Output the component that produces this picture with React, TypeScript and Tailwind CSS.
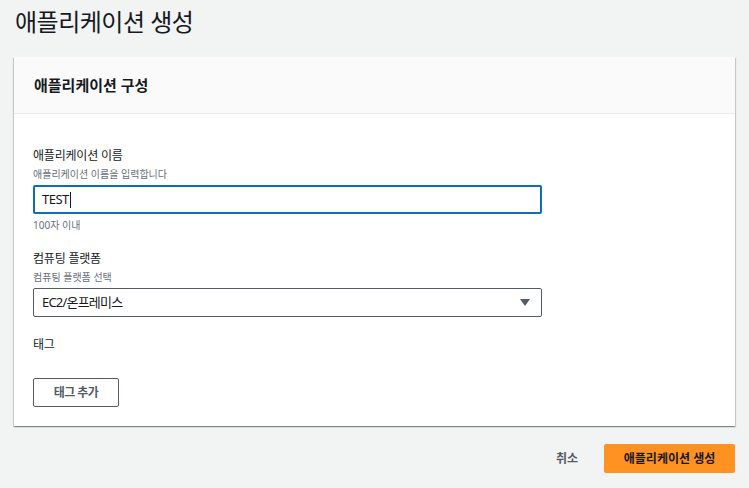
import React from "react";

export default function App() {
  const font = { fontFamily: '"Noto Sans", "Noto Sans CJK KR", sans-serif' };
  return (
    <div
      className="w-[749px] h-[488px] bg-[#f2f3f3] text-[#16191f] overflow-hidden"
      style={font}
    >
      <div className="px-[14px] pt-[6px]">
        <h1 className="text-[24px] leading-[32px] font-normal pl-[1px] tracking-[-0.5px] text-[#16191f]">
          애플리케이션 생성
        </h1>
        <div className="mt-[19px] bg-white shadow-[0_1px_1px_0_rgba(0,28,36,0.3),1px_1px_1px_0_rgba(0,28,36,0.15),-1px_1px_1px_0_rgba(0,28,36,0.15)]">
          <div className="h-[57px] bg-[#fafafa] border-b border-[#eaeded] flex items-center px-[20px]">
            <h2 className="text-[15px] font-bold leading-[20px]">애플리케이션 구성</h2>
          </div>
          <div className="px-[19px] pt-[32px] pb-[19px]">
            <div className="text-[12px] leading-[20px] tracking-[-0.2px] text-[#16191f]">애플리케이션 이름</div>
            <div className="text-[10px] leading-[16px] text-[#687078]">애플리케이션 이름을 입력합니다</div>
            <div className="mt-[3px] w-[509px] h-[29px] border-2 border-[#0a6ebd] rounded-[2px] flex items-center pl-[7px]">
              <span className="text-[13px] tracking-[-0.5px] text-[#16191f]">TEST</span>
              <span className="w-px h-[16px] bg-[#16191f] ml-[1px]" />
            </div>
            <div className="mt-[3px] text-[10px] leading-[16px] text-[#687078]">100자 이내</div>

            <div className="mt-[16px] text-[12px] leading-[20px] tracking-[-0.2px]">컴퓨팅 플랫폼</div>
            <div className="text-[10px] leading-[16px] text-[#687078]">컴퓨팅 플랫폼 선택</div>
            <div className="mt-[3px] w-[509px] h-[29px] border border-[#545b64] rounded-[2px] flex items-center justify-between pl-[8px] pr-[11px]">
              <span className="text-[13px] tracking-[-0.8px] text-[#16191f]">EC2/온프레미스</span>
              <svg width="10" height="7" viewBox="0 0 10 7">
                <path d="M0 0 L10 0 L5 7 Z" fill="#545b64" />
              </svg>
            </div>

            <div className="mt-[18px] text-[12px] leading-[20px] tracking-[-0.2px]">태그</div>
            <button className="mt-[23px] w-[86px] h-[29px] border border-[#545b64] rounded-[2px] bg-white text-[12px] font-bold tracking-[-0.6px] text-[#545b64] flex items-center justify-center">
              태그 추가
            </button>
          </div>
        </div>
        <div className="mt-[18px] flex justify-end items-center">
          <button className="text-[12px] font-bold text-[#545b64] mr-[26px]">취소</button>
          <button className="w-[131px] h-[29px] bg-[#ff9220] rounded-[2px] text-[12px] font-bold text-[#16191f] flex items-center justify-center">
            애플리케이션 생성
          </button>
        </div>
      </div>
    </div>
  );
}
